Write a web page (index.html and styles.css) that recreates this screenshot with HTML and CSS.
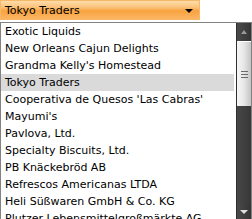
FILE: index.html
```html
<!DOCTYPE html>
<html lang="en">
<head>
    <meta charset="UTF-8">
    <title>Supplier Combo</title>
    <link rel="stylesheet" href="styles.css">
</head>
<body>
    <div class="combo">
        <span class="combo-text">Tokyo Traders</span>
        <span class="combo-arrow"></span>
    </div>
    <div class="dropdown">
        <ul class="items">
            <li>Exotic Liquids</li>
            <li>New Orleans Cajun Delights</li>
            <li>Grandma Kelly's Homestead</li>
            <li class="selected">Tokyo Traders</li>
            <li>Cooperativa de Quesos 'Las Cabras'</li>
            <li>Mayumi's</li>
            <li>Pavlova, Ltd.</li>
            <li>Specialty Biscuits, Ltd.</li>
            <li>PB Knäckebröd AB</li>
            <li>Refrescos Americanas LTDA</li>
            <li>Heli Süßwaren GmbH &amp; Co. KG</li>
            <li>Plutzer Lebensmittelgroßmärkte AG</li>
        </ul>
        <div class="scrollbar">
            <div class="scroll-btn"><span class="tri-up"></span></div>
            <div class="thumb">
                <i></i><i></i><i></i>
            </div>
            <div class="track"></div>
            <div class="scroll-btn"><span class="tri-down"></span></div>
        </div>
    </div>
</body>
</html>
```

FILE: styles.css
```css
body {
    margin: 0;
    width: 252px;
    height: 219px;
    overflow: hidden;
    background: #ffffff;
    font-family: "DejaVu Sans", Tahoma, sans-serif;
    font-size: 11px;
    color: #000000;
}

.combo {
    width: 198px;
    height: 18px;
    border: 1px solid #f7b867;
    background: linear-gradient(to bottom, #fddcab 0%, #fbc27a 35%, #f8a33f 55%, #fbb563 100%);
    display: flex;
    align-items: center;
    padding: 0;
}

.combo-text {
    flex: 1;
    padding-left: 4px;
}

.combo-arrow {
    width: 0;
    height: 0;
    border-left: 4px solid transparent;
    border-right: 4px solid transparent;
    border-top: 4px solid #000000;
    margin-right: 6px;
    margin-top: 1px;
}

.dropdown {
    margin-top: 2px;
    width: 250px;
    height: 198px;
    border: 1px solid #828282;
    display: flex;
    overflow: hidden;
}

.items {
    list-style: none;
    margin: 0;
    padding: 0;
    flex: 1;
    overflow: hidden;
}

.items li {
    height: 17px;
    line-height: 17px;
    padding-left: 4px;
    white-space: nowrap;
    margin-right: 2px;
}

.items li.selected {
    background: #dadada;
}

.scrollbar {
    width: 14px;
    background: #3f3f3f;
    display: flex;
    flex-direction: column;
    border-left: 1px solid #2e2e2e;
}

.scroll-btn {
    height: 18px;
    display: flex;
    align-items: center;
    justify-content: center;
    background: linear-gradient(to right, #4a4a4a, #353535);
}

.tri-up {
    border-left: 3px solid transparent;
    border-right: 3px solid transparent;
    border-bottom: 4px solid #9a9a9a;
}

.tri-down {
    border-left: 4px solid transparent;
    border-right: 4px solid transparent;
    border-top: 4px solid #e0e0e0;
}

.thumb {
    height: 64px;
    background: linear-gradient(to right, #f7f7f7 0%, #e6e6e6 50%, #c4c4c4 100%);
    border-top: 1px solid #ffffff;
    display: flex;
    flex-direction: column;
    align-items: center;
    justify-content: center;
    gap: 2px;
}

.thumb i {
    width: 7px;
    height: 1px;
    background: #6a6a6a;
}

.track {
    flex: 1;
    background: linear-gradient(to right, #474747, #383838);
}
```
